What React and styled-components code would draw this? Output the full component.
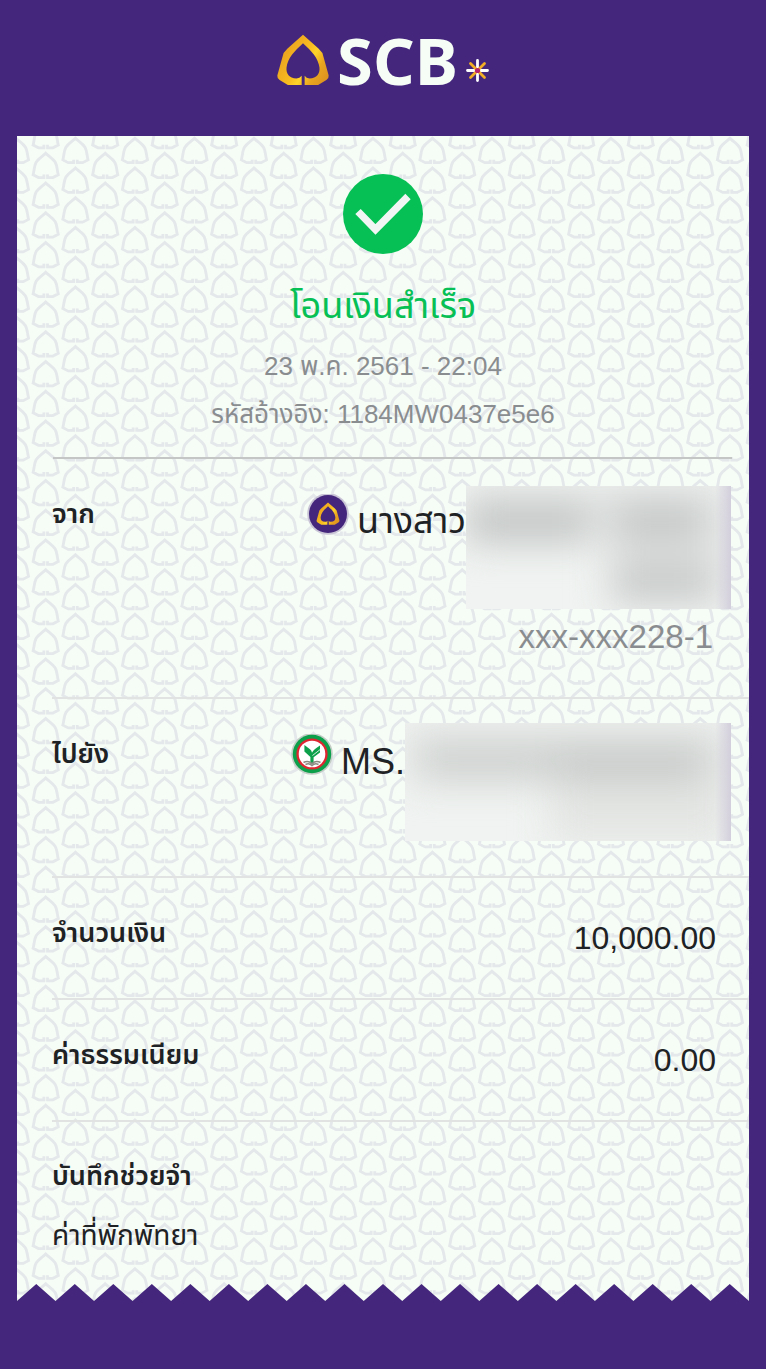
import React from 'react';
import styled, { createGlobalStyle } from 'styled-components';

const color = {
  purple: '#44277c',
  paper: '#f6fcf6',
  green: '#06c055',
  ink: '#1e2224',
  muted: '#8a8d90',
};

/* Watermark tile: staggered columns of thin leaves, repeated every 238 x 119. */
const STEP = 29.75;
const LEAF =
  'M-1.800 23V26H-7.200L-12.600 23.200C-11.400 19-11.600 14-9.400 10.400C-7 6.800-3 4.600 0 1.600' +
  'C3 4.600 7 6.800 9.400 10.400C11.600 14 11.400 19 12.600 23.200L7.200 26H1.800V23';

const leaves = [];
for (let i = -1; i <= 8; i += 1) {
  for (let j = -2; j <= 4; j += 1) {
    const x = 28.7 + i * STEP;
    const y = (i % 2 === 0 ? 15.6 : 0.7) + j * STEP;
    leaves.push(`<use href="#l" x="${x}" y="${y}"/>`);
  }
}
const watermark = `url("data:image/svg+xml,${encodeURIComponent(
  `<svg xmlns="http://www.w3.org/2000/svg" width="238" height="119"><defs><path id="l" d="${LEAF}" fill="none" stroke="#e4e8ea" stroke-width="2.800"/></defs>${leaves.join('')}</svg>`
)}")`;

const GlobalStyle = createGlobalStyle`
  *, *::before, *::after { box-sizing: border-box; }
  body {
    margin: 0;
    background: ${color.purple};
    color: ${color.ink};
    font-family: "Liberation Sans", "Noto Sans Thai", "Sarabun", "Loma", sans-serif;
  }
  h1, h2, p, dl, dt, dd { margin: 0; font-weight: 400; }
`;

const Page = styled.main`
  padding: 0 17px 68px;
`;

const Header = styled.header`
  display: flex;
  justify-content: center;
  align-items: flex-start;
  height: 136px;
  padding-top: 34px;
`;

const Brand = styled.span`
  margin-left: 8px;
  color: ${color.paper};
  font: 700 65px/52px "Noto Sans", "Open Sans", sans-serif;
`;

const Spark = styled.svg`
  margin: 25px 0 0 8px;
`;

const Slip = styled.article`
  background: ${color.paper} ${watermark};
`;

const Summary = styled.section`
  display: flex;
  flex-direction: column;
  align-items: center;
  height: 323px;
  margin: 0 17px 0 36px;
  padding: 38px 19px 0 0;
  border-bottom: 2px solid #c3c6c5;
`;

const Title = styled.h1`
  margin-top: 24px;
  color: ${color.green};
  font-size: 36px;
  line-height: 56px;
`;

const Meta = styled.p`
  margin-top: 16px;
  color: ${color.muted};
  font-size: 26px;
  line-height: 32px;
`;

const Details = styled.dl`
  padding-left: 35px;
`;

const Row = styled.div`
  display: flex;
  justify-content: space-between;
  align-items: flex-start;
  min-height: ${(p) => p.$height}px;
  padding-top: 24px;
  border-bottom: 2px solid #e0e3e1;
`;

const Label = styled.dt`
  padding-top: 13px;
  font-size: 27px;
  font-weight: 600;
  line-height: 36px;
`;

const Value = styled.dd`
  padding: 16px 33px 0 0;
  font-size: 32px;
  line-height: 40px;
`;

const Party = styled.dd`
  display: flex;
  flex-direction: column;
  align-items: flex-end;
  padding: ${(p) => p.$top || 0}px 18px 0 0;
`;

const PartyName = styled.div`
  display: flex;
  align-items: flex-start;
`;

const BankIcon = styled.svg`
  margin: ${(p) => p.$top}px 8px 0 0;
`;

const Name = styled.span`
  padding-top: ${(p) => p.$top}px;
  font-size: 36px;
  line-height: 44px;
`;

const Account = styled.span`
  padding: 8px 18px 0 0;
  color: ${color.muted};
  font-size: 33px;
  line-height: 40px;
`;

const Redacted = styled.span`
  position: relative;
  overflow: hidden;
  background: #f0f3f1;

  &::before {
    content: '';
    position: absolute;
    inset: 0;
    filter: blur(18px);
  }
  &::after {
    content: '';
    position: absolute;
    inset: 0 0 0 auto;
    width: 16px;
    background: linear-gradient(90deg, rgba(208, 203, 218, 0), rgba(208, 203, 218, 0.9));
  }
`;

const RedactedFrom = styled(Redacted)`
  width: 265px;
  height: 123px;

  &::before {
    background:
      linear-gradient(#c2c5c4, #c2c5c4) 0 18px / 122px 38px no-repeat,
      linear-gradient(#c4c7c6, #c4c7c6) 150px 16px / 88px 38px no-repeat,
      linear-gradient(#c2c5c4, #c2c5c4) 150px 80px / 94px 30px no-repeat,
      linear-gradient(#e2e4e3, #e2e4e3) 140px 0 / 125px 123px no-repeat,
      linear-gradient(#e2e5e3, #e2e5e3) 0 0 / 140px 58px no-repeat;
  }
`;

const RedactedTo = styled(Redacted)`
  width: 326px;
  height: 118px;

  &::before {
    background:
      linear-gradient(#cccfcd, #cccfcd) 20px 24px / 136px 32px no-repeat,
      linear-gradient(#c5c8c6, #c5c8c6) 156px 24px / 142px 32px no-repeat,
      linear-gradient(#dfe2e0, #dfe2e0) 0 4px / 326px 56px no-repeat,
      linear-gradient(#e3e5e3, #e3e5e3) 145px 60px / 181px 58px no-repeat;
  }
`;

const Memo = styled.section`
  padding: 36px 0 0 35px;
`;

const MemoTitle = styled.h2`
  font-size: 27px;
  font-weight: 600;
  line-height: 36px;
`;

const MemoText = styled.p`
  margin-top: 24px;
  font-size: 28px;
  line-height: 36px;
`;

const TornEdge = styled.svg`
  display: block;
  width: 100%;
  height: 17px;
  margin-top: 30px;
`;

const LEAF_PATH =
  'M126 42L79 84L67 98L48 166Q47 175 55 180L80 195H122V167Q116 175 106 175C84 175 74 160 76 142C79 113 100 92 126 68C152 92 173 113 176 142C178 160 168 175 146 175Q136 175 131 167V195H172L197 180Q205 175 204 166L185 98L173 84Z';

function GoldLeaf({ id }) {
  return (
    <>
      <defs>
        <linearGradient id={id} x1="0" y1="0.200" x2="1" y2="0.800">
          <stop offset="0" stopColor="#e0951c" />
          <stop offset="0.250" stopColor="#efab20" />
          <stop offset="0.500" stopColor="#f9bd20" />
          <stop offset="0.620" stopColor="#ffd42a" />
          <stop offset="0.800" stopColor="#e9a41f" />
          <stop offset="1" stopColor="#dd9420" />
        </linearGradient>
      </defs>
      <path d={LEAF_PATH} fill={`url(#${id})`} />
    </>
  );
}

function Sparkle() {
  return (
    <Spark width="23" height="23" viewBox="-11.5 -11.5 23 23" aria-hidden="true">
      <g strokeWidth="2.800" strokeLinecap="round">
        <path d="M0-10V10M-10 0H10" stroke="#fff" />
        <path d="M-7-7L7 7M7-7L-7 7" stroke="#f3ae25" />
      </g>
      <circle r="2.600" fill="#b5226e" />
    </Spark>
  );
}

function ScbBadge() {
  return (
    <BankIcon $top={8} width="42" height="44" viewBox="0 0 42 44" role="img" aria-label="SCB">
      <circle cx="21" cy="20" r="20.800" fill="#c9c4d6" />
      <circle cx="21" cy="20" r="19" fill="#44277c" />
      <svg x="9" y="7" width="24" height="25" viewBox="44 38 164 160">
        <GoldLeaf id="badgeGold" />
      </svg>
    </BankIcon>
  );
}

function KBankBadge() {
  return (
    <BankIcon $top={11} width="42" height="44" viewBox="0 0 42 44" role="img" aria-label="KBank">
      <circle cx="21" cy="20" r="20.800" fill="#c3cdc6" />
      <circle cx="21" cy="20" r="19.200" fill="#0ca04b" />
      <circle cx="21" cy="20" r="15.600" fill="#df2630" />
      <circle cx="21" cy="20" r="13.300" fill="#fff" />
      <path d="M13.400 11L19 15.200Q20.700 16.600 21 18.800Q22.500 15.500 29 11.500V18.500L22.600 23.300V29.500H19.400V23L13.400 17.600Z" fill="#0ca04b" />
      <path d="M21.500 21.500L29.600 15.200" stroke="#fff" strokeWidth="0.800" />
      <path d="M12.500 28.500Q17 26 21 29.500Q25 26 29.500 28.500M14.500 30.500Q18 28.500 21 31.500Q24 28.500 27.500 30.500" fill="none" stroke="#8b8980" strokeWidth="1.600" />
    </BankIcon>
  );
}

const TEETH = 19;
const teeth = Array.from({ length: TEETH }, (_, i) => `M${i * 2} 1L${i * 2 + 1} 0L${i * 2 + 2} 1Z`).join('');

export default function App() {
  return (
    <>
      <GlobalStyle />
      <Page>
        <Header>
          <svg width="52" height="52" viewBox="47 41 158 156" aria-hidden="true">
            <GoldLeaf id="logoGold" />
          </svg>
          <Brand>SCB</Brand>
          <Sparkle />
        </Header>
        <Slip>
          <Summary>
            <svg width="80" height="80" viewBox="0 0 80 80" role="img" aria-label="สำเร็จ">
              <circle cx="40" cy="40" r="40" fill={color.green} />
              <path d="M15 37.500L32.500 55.500L65 22.500" fill="none" stroke="#f1f5f3" strokeWidth="7.500" />
            </svg>
            <Title>โอนเงินสำเร็จ</Title>
            <Meta>23 พ.ค. 2561 - 22:04</Meta>
            <Meta>รหัสอ้างอิง: 1184MW0437e5e6</Meta>
          </Summary>
          <Details>
            <Row $height={240}>
              <Label>จาก</Label>
              <Party $top={3}>
                <PartyName>
                  <ScbBadge />
                  <Name $top={13}>นางสาว</Name>
                  <RedactedFrom />
                </PartyName>
                <Account>xxx-xxx228-1</Account>
              </Party>
            </Row>
            <Row $height={179}>
              <Label>ไปยัง</Label>
              <Party>
                <PartyName>
                  <KBankBadge />
                  <Name $top={17}>MS.</Name>
                  <RedactedTo />
                </PartyName>
              </Party>
            </Row>
            <Row $height={122}>
              <Label>จำนวนเงิน</Label>
              <Value>10,000.00</Value>
            </Row>
            <Row $height={122}>
              <Label>ค่าธรรมเนียม</Label>
              <Value>0.00</Value>
            </Row>
          </Details>
          <Memo>
            <MemoTitle>บันทึกช่วยจำ</MemoTitle>
            <MemoText>ค่าที่พักพัทยา</MemoText>
          </Memo>
          <TornEdge viewBox={`0 0 ${TEETH * 2} 1`} preserveAspectRatio="none" aria-hidden="true">
            <path d={teeth} fill={color.purple} />
          </TornEdge>
        </Slip>
      </Page>
    </>
  );
}
